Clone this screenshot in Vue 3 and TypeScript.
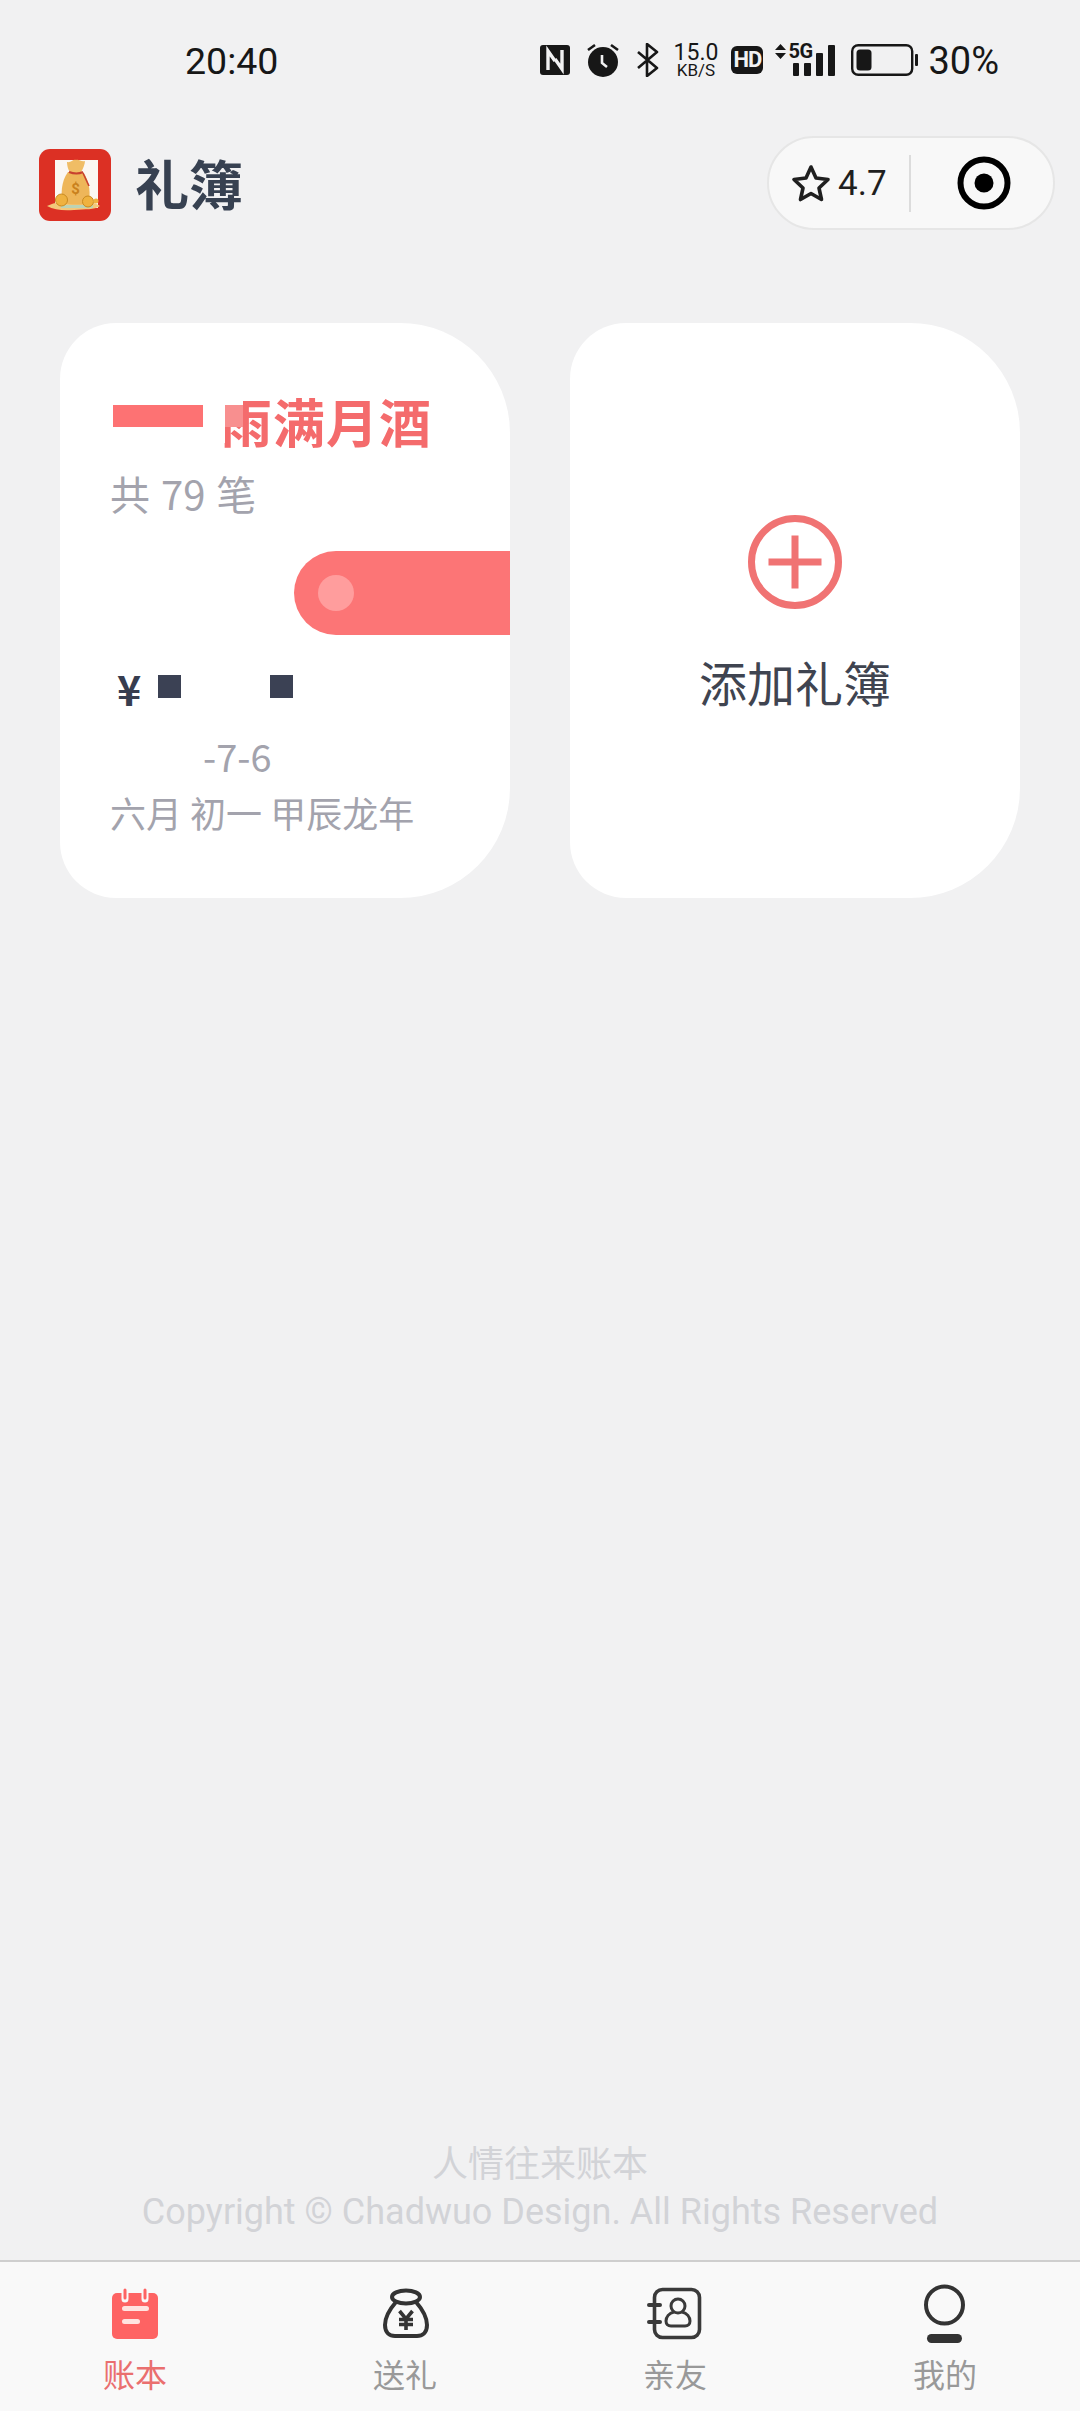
<script setup lang="ts">
const footerLines: string[] = ['人情往来账本', 'Copyright © Chadwuo Design. All Rights Reserved']
</script>

<template>
  <div class="page">
    <div class="status">
      <span class="time">20:40</span>
      <div class="status-icons">
        <svg class="ic-nfc" width="30" height="30" viewBox="0 0 30 30">
          <rect width="30" height="30" rx="3" fill="#171717" />
          <path d="M8 25V6l7 10M22 5v19l-7-10" fill="none" stroke="#f1f1f2" stroke-width="3.4" />
        </svg>
        <svg class="ic-alarm" width="32" height="34" viewBox="0 0 32 34">
          <circle cx="16" cy="19" r="15" fill="#171717" />
          <path d="M1 7l7-5M31 7l-7-5" stroke="#171717" stroke-width="2.6" />
          <path d="M15 12v8l5 4" fill="none" stroke="#f1f1f2" stroke-width="2.6" />
        </svg>
        <svg class="ic-bt" width="23" height="34" viewBox="0 0 23 34">
          <path d="M2 9l19 16-10 8V1l10 8L2 25" fill="none" stroke="#171717" stroke-width="2.6" stroke-linejoin="round" />
        </svg>
        <div class="speed"><span class="speed-num">15.0</span><span class="speed-unit">KB/S</span></div>
        <div class="hd">HD</div>
        <div class="signal">
          <svg class="sig-arrows" width="11" height="15" viewBox="0 0 11 15">
            <path d="M5.500 0L11 6H0zM0 9h11l-5.500 6z" fill="#171717" />
          </svg>
          <span class="sig-5g">5G</span>
          <svg class="sig-bars" width="44" height="31" viewBox="0 0 44 31">
            <rect x="0" y="18" width="6" height="13" rx="1" fill="#171717" />
            <rect x="11" y="18" width="7" height="13" rx="1" fill="#171717" />
            <rect x="23" y="8" width="7" height="23" rx="1" fill="#171717" />
            <rect x="35" y="0" width="7" height="31" rx="1" fill="#171717" />
          </svg>
        </div>
        <svg class="ic-batt" width="67" height="32" viewBox="0 0 67 32">
          <rect x="1.200" y="1.200" width="60" height="29.600" rx="6" fill="none" stroke="#171717" stroke-width="2.400" />
          <rect x="5.500" y="5.500" width="15" height="21" rx="3.500" fill="#171717" />
          <rect x="64" y="10" width="3" height="12" rx="1" fill="#171717" />
        </svg>
        <span class="pct">30%</span>
      </div>
    </div>

    <header class="header">
      <div class="brand">
        <svg class="logo" width="72" height="72" viewBox="0 0 72 72">
          <rect width="72" height="72" rx="11" fill="#dc3024" />
          <rect x="16" y="11" width="43" height="48" fill="#fbf7f2" />
          <path d="M8 57c8-4 18-5 28-5s20 1 25 5c-6 4-14 3-26 4-10 1-20 0-27-4z" fill="#f3c77a" />
          <path d="M22 56h32v3H22z" fill="#bcd3b4" />
          <path d="M29 23C22 32 21 48 25 54c6 2 20 2 24 0 3-7 2-22-5-31z" fill="#eeb659" />
          <path d="M28 13c4 1 6-3 9-2 3-1 5 2 9 1 0 3-2 8-4 11H31c-2-2-3-7-3-10z" fill="#f0bd65" />
          <path d="M30 23c5 2 10 2 14 0" fill="none" stroke="#c8412f" stroke-width="2" />
          <path d="M44 24l6 13" stroke="#c8412f" stroke-width="1.600" />
          <text x="36.500" y="45" class="logo-dollar">$</text>
          <circle cx="22.500" cy="51" r="6" fill="#efb23f" stroke="#c98a20" />
          <circle cx="49" cy="52.500" r="5.500" fill="#efb23f" stroke="#c98a20" />
          <circle cx="57" cy="52" r="2.500" fill="#efb23f" />
        </svg>
        <h1 class="title">礼簿</h1>
      </div>
      <div class="capsule">
        <svg class="star" width="40" height="38" viewBox="0 0 40 38">
          <path d="M20 3l5 11 12 1.500-9 8.500 2.500 11.500L20 29.500 9.500 35.500 12 24 3 15.500 15 14z" fill="none" stroke="#1f1f1f" stroke-width="3.600" stroke-linejoin="round" />
        </svg>
        <span class="rating">4.7</span>
        <span class="cap-div"></span>
        <svg class="target" width="54" height="54" viewBox="0 0 54 54">
          <circle cx="27" cy="27" r="23.500" fill="none" stroke="#000" stroke-width="6" />
          <circle cx="27" cy="27" r="9.500" fill="#000" />
        </svg>
      </div>
    </header>

    <main class="cards">
      <section class="card book">
        <div class="book-title">
          <span class="book-name">雨满月酒</span>
          <span class="redact-bar"></span>
          <span class="redact-mask"></span>
          <span class="redact-square"></span>
        </div>
        <div class="book-count">共 79 笔</div>
        <div class="pill"><span class="pill-dot"></span></div>
        <div class="amount">
          <span class="yen">¥</span>
          <span class="blot first"></span>
          <span class="blot second"></span>
        </div>
        <div class="date">-7-6</div>
        <div class="lunar">六月 初一 甲辰龙年</div>
      </section>

      <section class="card add">
        <svg class="plus" width="94" height="94" viewBox="0 0 94 94">
          <circle cx="47" cy="47" r="43.500" fill="none" stroke="#f07373" stroke-width="7" />
          <path d="M20.500 47h53M47 20.500v53" stroke="#f07373" stroke-width="7" />
        </svg>
        <div class="add-text">添加礼簿</div>
      </section>
    </main>

    <footer class="footer">
      <div v-for="line in footerLines" :key="line" class="footer-line">{{ line }}</div>
    </footer>

    <nav class="tabbar">
      <div class="tab active">
        <svg width="60" height="60" viewBox="0 0 60 60">
          <rect x="7" y="9" width="46" height="46" rx="5" fill="#fe6363" />
          <path d="M20 6v9M40 6v9" stroke="#f9f9f9" stroke-width="7" stroke-linecap="round" />
          <path d="M20 6v8M40 6v8" stroke="#fe6363" stroke-width="3" stroke-linecap="round" />
          <path d="M19.500 24.500h22M19.500 37.500h13" stroke="#ffe3e0" stroke-width="5" stroke-linecap="round" />
        </svg>
        <span>账本</span>
      </div>
      <div class="tab">
        <svg width="60" height="60" viewBox="0 0 60 60" fill="none" stroke="#333" stroke-width="4">
          <ellipse cx="31" cy="13" rx="14" ry="6.500" />
          <path d="M21 18C14 26 10 34 10 41c0 8 5 11 10 11h22c5 0 10-3 10-11 0-7-4-15-11-23" stroke-linecap="round" />
          <path d="M24.500 27l6.500 8 6.500-8M24 35.500h14M24 40.500h14M31 35v11" stroke-width="3.600" />
        </svg>
        <span>送礼</span>
      </div>
      <div class="tab">
        <svg width="60" height="60" viewBox="0 0 60 60" fill="none" stroke="#3a3a3a" stroke-width="3.600">
          <rect x="9.500" y="5.500" width="45" height="48" rx="8" />
          <path d="M4 21h11M4 38h11" stroke-width="4" stroke-linecap="round" />
          <circle cx="33" cy="22" r="7" stroke-width="3" />
          <path d="M29 28c-5 1-8 5-8 9 0 3 2 5 5 5h14c3 0 5-2 5-5 0-4-3-8-8-9" stroke-width="3" />
        </svg>
        <span>亲友</span>
      </div>
      <div class="tab">
        <svg width="60" height="60" viewBox="0 0 60 60" fill="none" stroke="#333">
          <circle cx="29.500" cy="21" r="18.500" stroke-width="4" />
          <path d="M16.500 54.500h26" stroke-width="9" stroke-linecap="round" />
        </svg>
        <span>我的</span>
      </div>
    </nav>
  </div>
</template>

<style>
html,
body {
  margin: 0;
  background: #f1f1f2;
}
</style>

<style scoped>
.page {
  width: 1080px;
  height: 2411px;
  display: flex;
  flex-direction: column;
  background: #f1f1f2;
  font-family: Roboto, "Noto Sans CJK SC", sans-serif;
  overflow: hidden;
}

.status {
  height: 120px;
  flex: none;
  display: flex;
  align-items: center;
  justify-content: space-between;
  padding: 0 81px 0 185px;
  color: #171717;
  box-sizing: border-box;
}
.time {
  font-size: 37.500px;
  line-height: 44px;
  margin-top: 2px;
}
.status-icons {
  display: flex;
  align-items: center;
}
.status-icons > * {
  flex: none;
}
.ic-alarm {
  margin-left: 17px;
}
.ic-bt {
  margin-left: 17px;
}
.speed {
  margin-left: 13px;
  width: 47px;
  display: flex;
  flex-direction: column;
  align-items: center;
}
.speed-num {
  font-size: 23px;
  line-height: 20px;
}
.speed-unit {
  font-size: 17px;
  line-height: 15px;
}
.hd {
  margin-left: 12px;
  width: 32px;
  height: 28px;
  border-radius: 6px;
  background: #171717;
  color: #f1f1f2;
  font-size: 22px;
  font-weight: 700;
  line-height: 28px;
  text-align: center;
  letter-spacing: -1px;
}
.signal {
  margin-left: 12px;
  width: 62px;
  height: 32px;
  position: relative;
}
.sig-arrows {
  position: absolute;
  left: 0;
  top: 0;
}
.sig-5g {
  position: absolute;
  left: 13px;
  top: -1px;
  font-size: 20px;
  font-weight: 700;
  line-height: 17px;
  letter-spacing: -0.5px;
}
.sig-bars {
  position: absolute;
  left: 18px;
  top: 1px;
}
.ic-batt {
  margin-left: 14px;
}
.pct {
  margin-left: 10px;
  font-size: 38px;
  line-height: 44px;
  margin-top: 2px;
}

.header {
  flex: none;
  height: 94px;
  margin-top: 16px;
  padding: 0 25px 0 39px;
  display: flex;
  align-items: center;
  justify-content: space-between;
}
.brand {
  display: flex;
  align-items: center;
  gap: 24px;
  margin-top: 4px;
}
.title {
  margin: -4px 0 0;
  font-size: 54px;
  font-weight: 700;
  line-height: 72px;
  color: #374151;
  font-family: "Noto Sans CJK SC", sans-serif;
}
.capsule {
  width: 288px;
  height: 94px;
  box-sizing: border-box;
  border: 2px solid #e6e6e6;
  border-radius: 47px;
  background: #f8f8f8;
  display: flex;
  align-items: center;
  padding-left: 22px;
}
.rating {
  margin-left: 7px;
  font-size: 35px;
  color: #1f1f1f;
}
.cap-div {
  width: 2px;
  height: 57px;
  margin-left: 22px;
  background: #dcdcdc;
}
.target {
  margin-left: 46px;
}

.cards {
  flex: none;
  margin-top: 93px;
  padding: 0 60px;
  display: grid;
  grid-template-columns: 450px 450px;
  gap: 60px;
}
.card {
  height: 575px;
  box-sizing: border-box;
  background: #fff;
  border-radius: 56px 110px 110px 56px;
  overflow: hidden;
}
.book {
  display: flex;
  flex-direction: column;
  padding-top: 68px;
  font-family: "Noto Sans CJK SC", sans-serif;
}
.book-title {
  position: relative;
  height: 60px;
  padding-left: 160px;
}
.book-name {
  font-size: 52px;
  font-weight: 700;
  letter-spacing: 1px;
  line-height: 60px;
  color: #f46b6c;
  white-space: nowrap;
}
.redact-bar {
  position: absolute;
  left: 53px;
  top: 14px;
  width: 90px;
  height: 22px;
  background: #fd7273;
}
.redact-mask {
  position: absolute;
  left: 143px;
  top: 0;
  width: 22px;
  height: 52px;
  background: #fff;
}
.redact-square {
  position: absolute;
  left: 165px;
  top: 0;
  width: 18px;
  height: 36px;
  background: linear-gradient(#fff 14px, #f88f8f 14px);
}
.book-count {
  margin-top: 12px;
  padding-left: 50px;
  font-size: 40px;
  word-spacing: 2px;
  line-height: 60px;
  color: #a3a3ad;
}
.pill {
  margin-top: 28px;
  align-self: flex-end;
  width: 216px;
  height: 84px;
  flex: none;
  border-radius: 42px 0 0 42px;
  background: #fc7576;
  display: flex;
  align-items: center;
  padding-left: 24px;
  box-sizing: border-box;
}
.pill-dot {
  width: 36px;
  height: 36px;
  border-radius: 50%;
  background: #ff9d9d;
}
.amount {
  margin-top: 40px;
  height: 32px;
  padding-left: 57px;
  display: flex;
  position: relative;
  color: #373d4f;
}
.yen {
  font-size: 41px;
  font-weight: 700;
  line-height: 26px;
  width: 41px;
}
.blot {
  width: 23px;
  height: 23px;
  background: #3b4154;
}
.blot.second {
  margin-left: 89px;
}
.date {
  margin-top: 27px;
  padding-left: 143px;
  font-size: 38px;
  line-height: 44px;
  color: #a3a3ad;
}
.lunar {
  margin-top: 12px;
  padding-left: 50px;
  font-size: 36px;
  line-height: 44px;
  color: #a3a3ad;
  white-space: nowrap;
}
.add {
  display: flex;
  flex-direction: column;
  align-items: center;
  padding-top: 192px;
  font-family: "Noto Sans CJK SC", sans-serif;
}
.add-text {
  margin-top: 40px;
  font-size: 48px;
  line-height: 64px;
  color: #3f4450;
}

.footer {
  margin-top: auto;
  padding-bottom: 24px;
  text-align: center;
  color: #d2d3d7;
}
.footer-line {
  font-size: 36px;
  line-height: 47px;
  white-space: nowrap;
}

.tabbar {
  flex: none;
  height: 151px;
  box-sizing: border-box;
  border-top: 2px solid #cfcfcf;
  background: #f9f9f9;
  display: grid;
  grid-template-columns: repeat(4, 1fr);
  padding-top: 22px;
}
.tab {
  display: flex;
  flex-direction: column;
  align-items: center;
  font-family: "Noto Sans CJK SC", sans-serif;
  font-size: 32px;
  line-height: 40px;
  color: #999;
}
.tab svg {
  margin-bottom: 9px;
}
.tab.active {
  color: #ea6f6f;
}
.logo-dollar {
  font-size: 15px;
  font-weight: 700;
  fill: #c9811d;
  text-anchor: middle;
  font-family: Roboto, sans-serif;
}
</style>
